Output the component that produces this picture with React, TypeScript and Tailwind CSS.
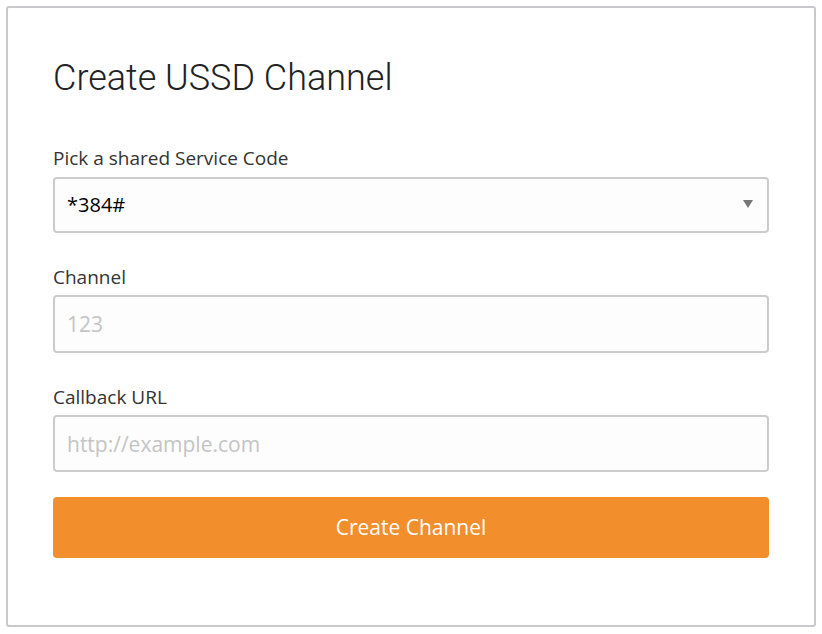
export default function App() {
  const fields = [
    { label: "Channel", placeholder: "123", mt: "mt-[32px]", h: "h-[58px]" },
    { label: "Callback URL", placeholder: "http://example.com", mt: "mt-[32px]", h: "h-[57px]" },
  ];

  return (
    <div className="min-h-screen bg-white p-[6px]">
      <div className="rounded-[3px] border-2 border-[#c9c9cd] px-[45px] pt-[50px] pb-[67px]">
        <h1 className="font-['Roboto',sans-serif] text-[36px] font-light leading-[40px] text-[#222]">
          Create USSD Channel
        </h1>

        <form className="mt-[48px] font-['Open_Sans',sans-serif]" onSubmit={(e) => e.preventDefault()}>
          <label className="mb-[7px] block text-[19px] leading-[24px] text-[#333]">
            Pick a shared Service Code
          </label>
          <div className="relative">
            <select className="h-[56px] w-full appearance-none rounded-[4px] border-2 border-[#cccccc] bg-[#fdfdfd] pl-[12px] text-[20px] text-black outline-none">
              <option>*384#</option>
            </select>
            <span className="pointer-events-none absolute right-[16px] top-[23px] h-0 w-0 border-x-[5px] border-t-[8px] border-x-transparent border-t-[#777]" />
          </div>

          {fields.map((f) => (
            <div key={f.label} className={f.mt}>
              <label className="mb-[6px] block text-[19px] leading-[24px] text-[#333]">{f.label}</label>
              <input
                placeholder={f.placeholder}
                className={`${f.h} w-full rounded-[4px] border-2 border-[#cccccc] bg-[#fdfdfd] px-[12px] text-[21px] text-black outline-none placeholder:text-[#c4c4c4]`}
              />
            </div>
          ))}

          <button
            type="submit"
            className="mt-[25px] h-[61px] w-full rounded-[4px] bg-[#f28e2c] text-[21px] text-white"
          >
            Create Channel
          </button>
        </form>
      </div>
    </div>
  );
}
